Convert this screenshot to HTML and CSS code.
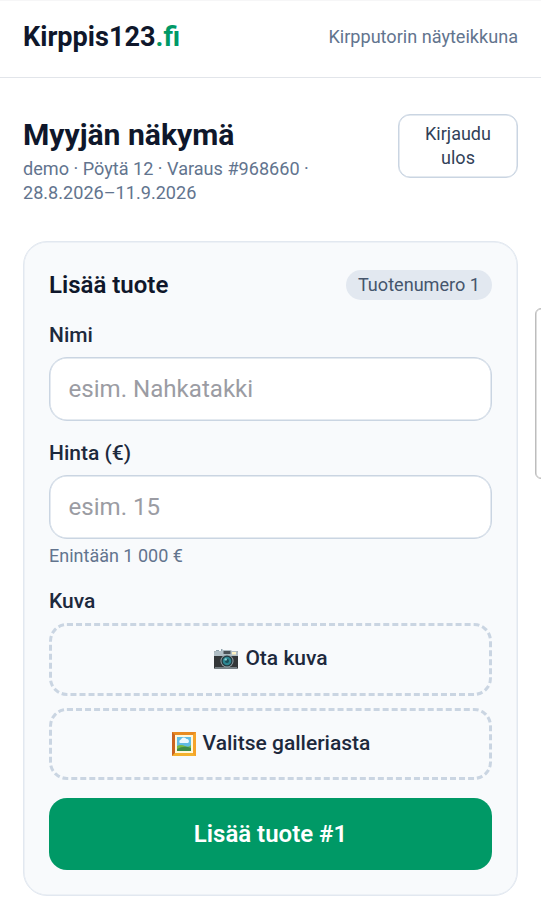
FILE: index.html
```html
<!DOCTYPE html>
<html lang="fi">
<head>
<meta charset="utf-8">
<meta name="viewport" content="width=device-width, initial-scale=1">
<title>Kirppis123.fi</title>
<link rel="stylesheet" href="styles.css">
</head>
<body>
<header class="site-header">
  <div class="logo">Kirppis123<span class="logo-tld">.fi</span></div>
  <div class="tagline">Kirpputorin näyteikkuna</div>
</header>
<main class="page">
  <section class="intro">
    <div class="intro-text">
      <h1 class="title">Myyjän näkymä</h1>
      <p class="details">demo · Pöytä 12 · Varaus #968660 · <br>28.8.2026–11.9.2026</p>
    </div>
    <button class="logout" type="button">Kirjaudu ulos</button>
  </section>
  <form class="card">
    <div class="card-head">
      <h2 class="card-title">Lisää tuote</h2>
      <span class="badge">Tuotenumero 1</span>
    </div>
    <div class="field">
      <label class="label" for="name">Nimi</label>
      <input class="input" id="name" type="text" placeholder="esim. Nahkatakki">
    </div>
    <div class="field">
      <label class="label" for="price">Hinta (€)</label>
      <input class="input" id="price" type="text" placeholder="esim. 15">
      <p class="hint">Enintään 1 000 €</p>
    </div>
    <div class="field">
      <span class="label">Kuva</span>
      <div class="pickers">
        <button class="picker" type="button">
          <svg class="icon" viewBox="0 0 26 26">
            <path d="M3 4h3v2H3zM8 3h1.5v3H8z" fill="#90a4ae"/>
            <rect x="1" y="5" width="24" height="18" rx="1.5" fill="#333638"/>
            <path d="M1 10V6.5Q1 5 2.500 5H9l1-1h8l1 1h4.500Q25 5 25 6.500V10z" fill="#b0bec5"/>
            <rect x="10.500" y="5" width="7" height="3" rx=".5" fill="#4b5358"/>
            <rect x="19" y="6" width="4" height="2.500" fill="#fff3c4"/>
            <path d="M2 21h22v2H2z" fill="#757f84"/>
            <circle cx="14" cy="15" r="6.500" fill="#9ba9ae"/>
            <circle cx="14" cy="15" r="5.600" fill="#24383e"/>
            <circle cx="14" cy="15" r="4.300" fill="#2c8590"/>
            <circle cx="14" cy="15" r="2" fill="#194f58"/>
            <circle cx="12.700" cy="13.400" r="1.200" fill="#8ad4d7"/>
          </svg>
          <span class="picker-text">Ota kuva</span>
        </button>
        <button class="picker" type="button">
          <svg class="icon" viewBox="0 0 26 26">
            <path d="M1 1h24v24H1z" fill="#e88b22"/>
            <path d="M1 1l3 3v18l-3 3z" fill="#ca6420"/>
            <path d="M1 25l3-3h18l3 3z" fill="#f4b12e"/>
            <path d="M25 1l-3 3v18l3 3z" fill="#f6a329"/>
            <path d="M4 4h18v18H4z" fill="#fff8dc"/>
            <path d="M6 6h14v14H6z" fill="#61bce5"/>
            <path d="M6 15q4-2 8 0t6-1v6H6z" fill="#79b943"/>
            <path d="M6 18q7-4 14-1v3H6z" fill="#3f8c48"/>
            <path d="M9 12a2 2 0 0 1 1-3.500 3 3 0 0 1 5.500-.500A2.200 2.200 0 0 1 17 12z" fill="#eef9ff"/>
          </svg>
          <span class="picker-text">Valitse galleriasta</span>
        </button>
      </div>
    </div>
    <button class="submit" type="button">Lisää tuote #1</button>
  </form>
</main>
<div class="edge-panel"></div>
</body>
</html>
```
FILE: styles.css
```css
* { box-sizing: border-box; }
body {
  margin: 0;
  height: 918px;
  position: relative;
  overflow: hidden;
  background: #fff;
  color: #0f172b;
  font-family: Roboto, "Liberation Sans", sans-serif;
}
h1, h2, p { margin: 0; }
button, input { font-family: inherit; }
.site-header {
  height: 78px;
  padding: 0 23px 4px;
  display: flex;
  align-items: center;
  justify-content: space-between;
  border-top: 1px solid #f6f6f7;
  border-bottom: 1px solid #e2e5ea;
}
.logo { font-size: 27.1px; line-height: 42px; font-weight: 700; }
.logo-tld { color: #009966; }
.tagline { font-size: 18.1px; line-height: 24px; color: #62748e; }
.page { padding: 36px 23px 0; }
.intro { display: flex; justify-content: space-between; align-items: flex-start; }
.title { font-size: 30.1px; line-height: 42px; padding-bottom: 1px; font-weight: 700; }
.details { font-size: 18.1px; line-height: 24px; color: #62748e; }
.logout {
  width: 120px;
  height: 64px;
  padding: 0 16px;
  border: 1px solid #cad5e2;
  box-shadow: inset 0 0 0 .5px #cad5e2;
  border-radius: 12px;
  background: #fff;
  color: #314158;
  font-size: 18px;
  line-height: 24px;
}
.card {
  margin-top: 36px;
  height: 655px;
  padding: 25px 25px 0;
  border: 1px solid #e2e8f0;
  box-shadow: inset 0 0 0 .5px #e2e8f0;
  border-radius: 24px;
  background: #f8fafc;
}
.card-head {
  height: 36px;
  margin-bottom: 18px;
  display: flex;
  align-items: center;
  justify-content: space-between;
}
.card-title { font-size: 24px; line-height: 36px; font-weight: 600; }
.badge {
  padding: 3px 12px;
  border-radius: 15px;
  background: #e2e8f0;
  color: #45556c;
  font-size: 18.1px;
  line-height: 24px;
}
.field { margin-bottom: 18px; }
.label {
  display: block;
  padding-bottom: 2px;
  margin-bottom: 6px;
  font-size: 21px;
  line-height: 28px;
  font-weight: 500;
  color: #1d293d;
}
.input {
  display: block;
  width: 100%;
  height: 64px;
  padding: 0 18.5px;
  border: 1px solid #cad5e2;
  box-shadow: inset 0 0 0 .5px #cad5e2;
  border-radius: 18px;
  background: #fff;
  font-size: 24.1px;
}
.input::placeholder { color: #9b9ca3; opacity: 1; }
.hint { margin-top: 5px; padding-bottom: 1px; font-size: 18px; line-height: 24px; color: #62748e; }
.pickers { display: grid; gap: 12px; }
.picker {
  height: 72.500px;
  padding: 0;
  display: flex;
  align-items: center;
  justify-content: center;
  gap: 6px;
  border: 3px dashed #cad5e2;
  border-radius: 18px;
  background: transparent;
  color: #1d293d;
  font-size: 21px;
  font-weight: 500;
}
.picker-text { padding-bottom: 2px; }
.icon { width: 26px; height: 26px; }
.submit {
  display: block;
  width: 100%;
  height: 72px;
  border: 0;
  border-radius: 18px;
  background: #009966;
  color: #fff;
  font-size: 24px;
  font-weight: 600;
}
.edge-panel {
  position: absolute;
  left: 535px;
  top: 308px;
  width: 20px;
  height: 171px;
  border: 1px solid #bdbdbd;
  box-shadow: inset 0 0 0 .5px #bdbdbd;
  border-radius: 6px;
  background: #fff;
}
```
